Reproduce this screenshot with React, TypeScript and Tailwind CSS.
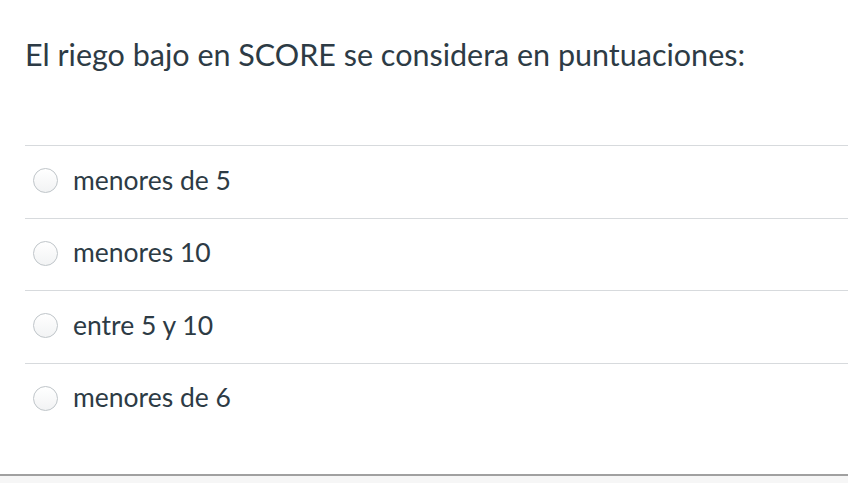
const options = ['menores de 5', 'menores 10', 'entre 5 y 10', 'menores de 6'];

export default function App() {
  return (
    <div className="w-[848px] h-[483px] bg-white overflow-hidden flex flex-col font-['Lato',sans-serif] text-[#2d3b45]">
      <div className="pl-[25px] flex-1">
        <h1 className="pt-[34px] h-[145px] text-[30.5px] leading-[40px] font-normal">
          El riego bajo en SCORE se considera en puntuaciones:
        </h1>
        <div className="flex flex-col">
          {options.map((opt) => (
            <label
              key={opt}
              className="flex items-center h-[72.5px] gap-[15px] pl-[8px] border-t border-[#d7dadd]"
            >
              <span className="w-[25px] h-[25px] -mt-[2px] rounded-full border border-[#bfc5c9] bg-gradient-to-b from-white to-[#f2f3f4] shrink-0" />
              <span className="text-[26.5px] leading-none pb-[4px]">{opt}</span>
            </label>
          ))}
        </div>
      </div>
      <div className="h-[9px] border-t-2 border-[#a0a0a0] bg-[#f6f6f6]" />
    </div>
  );
}
